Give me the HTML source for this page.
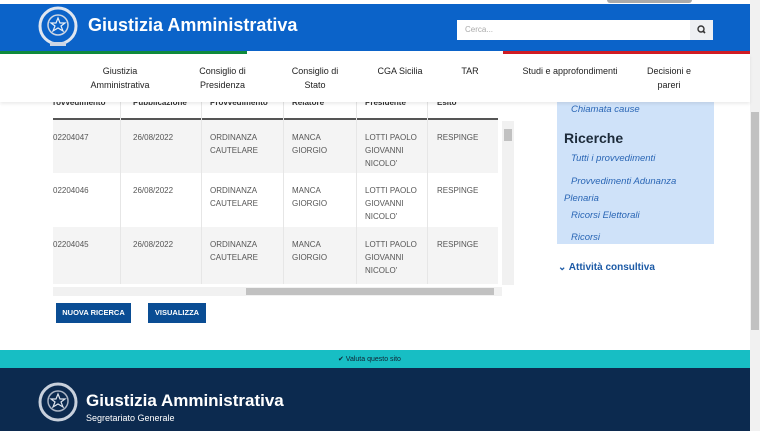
<!DOCTYPE html>
<html><head><meta charset="utf-8"><style>
*{margin:0;padding:0;box-sizing:border-box}
body{width:760px;height:431px;overflow:hidden;background:#fff;font-family:"Liberation Sans",sans-serif;position:relative}
.abs{position:absolute}
.hdr{left:0;top:4px;width:750px;height:47px;background:#0b63c9}
.title{left:88px;top:15px;color:#fff;font-size:18px;font-weight:bold}
.search{left:457px;top:20px;width:256px;height:20px;background:#fff}
.search span{position:absolute;left:8px;top:5px;font-size:8px;color:#aaa}
.sbtn{position:absolute;right:0;top:0;width:23px;height:20px;background:#eef0f3}
.nav{left:0;top:54px;width:750px;height:48px;background:#fff;box-shadow:0 2px 3px rgba(0,0,0,.08);z-index:3}
.nav div{position:absolute;top:10px;font-size:9px;color:#222;text-align:center;line-height:14px}
.th{top:98px;font-size:8px;color:#333;font-weight:bold}
.cell{font-size:8px;color:#555;line-height:13px}
.vl{top:96px;width:1px;height:188px;background:#e6e6e6}
.btn{top:303px;height:20px;background:#0a4d94;color:#fff;font-size:7.5px;font-weight:bold;text-align:center;line-height:20px}
.side{left:557px;top:96px;width:157px;height:148px;background:#cfe2f9}
.side i{position:absolute;font-size:9.5px;color:#2a66b5}
</style></head><body>
<div class="abs" style="left:607px;top:0;width:85px;height:3px;background:#aaa;border-radius:0 0 3px 3px"></div>
<div class="abs hdr"></div>
<svg class="abs" style="left:36px;top:4px" width="44" height="46" viewBox="0 0 44 46"><circle cx="22" cy="22" r="18" fill="none" stroke="#dfe6f0" stroke-width="3"/><circle cx="22" cy="21" r="10" fill="none" stroke="#cdd6e4" stroke-width="1.5"/><polygon points="22,14 24,19 29,19 25,22 27,27 22,24 17,27 19,22 15,19 20,19" fill="none" stroke="#e8eef6" stroke-width="1.2"/><rect x="14" y="38" width="16" height="4" fill="#cdd6e4"/></svg>
<div class="abs title">Giustizia Amministrativa</div>
<div class="abs search"><span>Cerca...</span><div class="sbtn"><svg width="23" height="20"><circle cx="11" cy="9" r="3" fill="none" stroke="#333" stroke-width="1.4"/><line x1="13" y1="11" x2="15" y2="13" stroke="#333" stroke-width="1.6"/></svg></div></div>
<div class="abs" style="left:0;top:51px;width:247px;height:3px;background:#0f8a3c"></div>
<div class="abs" style="left:503px;top:51px;width:247px;height:3px;background:#d01c24"></div>
<div class="abs nav">
<div style="left:80px;width:80px">Giustizia<br>Amministrativa</div>
<div style="left:185px;width:75px">Consiglio di<br>Presidenza</div>
<div style="left:280px;width:70px">Consiglio di<br>Stato</div>
<div style="left:370px;width:60px">CGA Sicilia</div>
<div style="left:450px;width:40px">TAR</div>
<div style="left:510px;width:120px">Studi e approfondimenti</div>
<div style="left:640px;width:58px">Decisioni e<br>pareri</div>
</div>
<div class="abs th" style="left:53px">rovvedimento</div>
<div class="abs th" style="left:133px">Pubblicazione</div>
<div class="abs th" style="left:210px">Provvedimento</div>
<div class="abs th" style="left:292px">Relatore</div>
<div class="abs th" style="left:365px">Presidente</div>
<div class="abs th" style="left:437px">Esito</div>
<div class="abs" style="left:53px;top:118px;width:445px;height:2px;background:#555"></div>
<div class="abs" style="left:53px;top:120px;width:445px;height:53px;background:#f4f4f4"></div>
<div class="abs" style="left:53px;top:227px;width:445px;height:57px;background:#f4f4f4"></div>
<div class="abs vl" style="left:120px"></div><div class="abs vl" style="left:201px"></div><div class="abs vl" style="left:283px"></div><div class="abs vl" style="left:356px"></div><div class="abs vl" style="left:427px"></div>
<div class="abs cell" style="left:53px;top:131px">02204047</div><div class="abs cell" style="left:133px;top:131px">26/08/2022</div><div class="abs cell" style="left:210px;top:131px">ORDINANZA<br>CAUTELARE</div><div class="abs cell" style="left:292px;top:131px">MANCA<br>GIORGIO</div><div class="abs cell" style="left:365px;top:131px">LOTTI PAOLO<br>GIOVANNI<br>NICOLO'</div><div class="abs cell" style="left:437px;top:131px">RESPINGE</div>
<div class="abs cell" style="left:53px;top:184px">02204046</div><div class="abs cell" style="left:133px;top:184px">26/08/2022</div><div class="abs cell" style="left:210px;top:184px">ORDINANZA<br>CAUTELARE</div><div class="abs cell" style="left:292px;top:184px">MANCA<br>GIORGIO</div><div class="abs cell" style="left:365px;top:184px">LOTTI PAOLO<br>GIOVANNI<br>NICOLO'</div><div class="abs cell" style="left:437px;top:184px">RESPINGE</div>
<div class="abs cell" style="left:53px;top:238px">02204045</div><div class="abs cell" style="left:133px;top:238px">26/08/2022</div><div class="abs cell" style="left:210px;top:238px">ORDINANZA<br>CAUTELARE</div><div class="abs cell" style="left:292px;top:238px">MANCA<br>GIORGIO</div><div class="abs cell" style="left:365px;top:238px">LOTTI PAOLO<br>GIOVANNI<br>NICOLO'</div><div class="abs cell" style="left:437px;top:238px">RESPINGE</div>
<div class="abs" style="left:502px;top:121px;width:12px;height:164px;background:#f1f1f1"></div>
<div class="abs" style="left:504px;top:129px;width:8px;height:12px;background:#c1c1c1"></div>
<div class="abs" style="left:53px;top:287px;width:449px;height:9px;background:#f1f1f1"></div>
<div class="abs" style="left:246px;top:288px;width:248px;height:7px;background:#c1c1c1"></div>
<div class="abs btn" style="left:56px;width:75px">NUOVA RICERCA</div>
<div class="abs btn" style="left:148px;width:58px">VISUALIZZA</div>
<div class="abs side"><i style="left:14px;top:8px">Chiamata cause</i><div style="position:absolute;left:7px;top:34px;font-size:14px;color:#1d2b3a;font-weight:bold">Ricerche</div><i style="left:14px;top:57px">Tutti i provvedimenti</i><i style="left:7px;top:77px;text-indent:7px;line-height:17px;width:140px">Provvedimenti Adunanza Plenaria</i><i style="left:14px;top:114px">Ricorsi Elettorali</i><i style="left:14px;top:136px">Ricorsi</i></div>
<div class="abs" style="left:558px;top:262px;font-size:10px;color:#1c5aa6;font-weight:bold">⌄ Attività consultiva</div>
<div class="abs" style="left:750px;top:0;width:10px;height:431px;background:#f1f1f1"></div>
<div class="abs" style="left:751px;top:112px;width:8px;height:218px;background:#c1c1c1"></div>
<div class="abs" style="left:0;top:350px;width:750px;height:18px;background:#17bec4"></div>
<div class="abs" style="left:338px;top:355px;font-size:7px;color:#123;">✔ Valuta questo sito</div>
<div class="abs" style="left:0;top:368px;width:750px;height:63px;background:#0c2a4f"></div>
<svg class="abs" style="left:36px;top:380px" width="44" height="46" viewBox="0 0 44 46"><circle cx="22" cy="22" r="18" fill="none" stroke="#c8d0dc" stroke-width="3"/><circle cx="22" cy="21" r="10" fill="none" stroke="#aab4c4" stroke-width="1.5"/><polygon points="22,14 24,19 29,19 25,22 27,27 22,24 17,27 19,22 15,19 20,19" fill="none" stroke="#dde3ec" stroke-width="1.2"/></svg>
<div class="abs" style="left:86px;top:391px;color:#fff;font-size:17px;font-weight:bold">Giustizia Amministrativa</div>
<div class="abs" style="left:86px;top:413px;color:#fff;font-size:9px">Segretariato Generale</div>
</body></html>
